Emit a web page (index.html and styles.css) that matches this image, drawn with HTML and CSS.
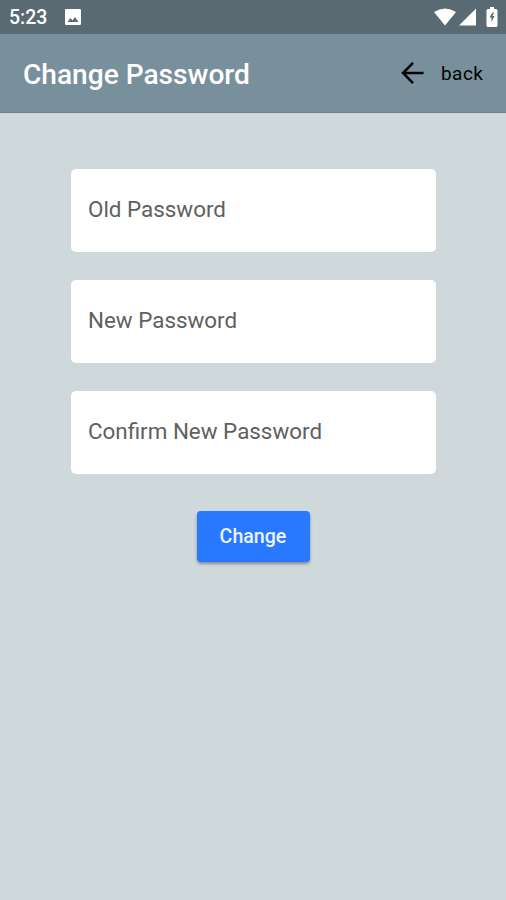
FILE: index.html
```html
<!DOCTYPE html>
<html lang="en">
<head>
<meta charset="utf-8">
<title>Change Password</title>
<link rel="stylesheet" href="styles.css">
</head>
<body>
<div class="status">
  <span class="time">5:23</span>
  <svg class="photo" width="18" height="18" viewBox="0 0 18 18"><path fill="#fff" fill-rule="evenodd" d="M2.200 1h13.600a1.200 1.200 0 0 1 1.200 1.200v13.600a1.200 1.200 0 0 1-1.200 1.200h-13.600a1.200 1.200 0 0 1-1.200-1.200v-13.600a1.200 1.200 0 0 1 1.200-1.200zM3.500 14h11l-3.500-5-2.500 3.500-2-2.500z"/></svg>
  <div class="signals">
    <svg class="wifi" width="22" height="18" viewBox="0 0 22 18"><path fill="#fff" d="M0 4Q11-3 22 4L11 17.500z"/></svg>
    <svg class="cell" width="17" height="18" viewBox="0 0 17 18"><path fill="#fff" d="M17 0.500v17H0z"/></svg>
    <svg width="12" height="20" viewBox="0 0 12 20"><path fill="#fff" fill-rule="evenodd" d="M4 0h4v2h2a1.500 1.500 0 0 1 1.500 1.500v15a1.500 1.500 0 0 1-1.500 1.500h-8a1.500 1.500 0 0 1-1.500-1.500v-15a1.500 1.500 0 0 1 1.500-1.500h2zM6.500 5.500l-3 5h2v4.500l3-6H6.500l1.500-3.500z"/></svg>
  </div>
</div>
<header class="toolbar">
  <h1>Change Password</h1>
  <a class="back"><svg width="24" height="24" viewBox="0 0 24 24"><path fill="none" stroke="#000" stroke-width="2.500" d="M12 1.800L2 12l10 10.200M2 12h20.500"/></svg><span>back</span></a>
</header>
<main class="form">
  <div class="field"><span>Old Password</span></div>
  <div class="field"><span>New Password</span></div>
  <div class="field"><span>Confirm New Password</span></div>
  <button class="submit">Change</button>
</main>
</body>
</html>
```
FILE: styles.css
```css
body { margin: 0; min-height: 900px; background: #cfd8db; font-family: Roboto, sans-serif; }
.status { height: 34px; box-sizing: border-box; background: #596a73; color: #fff; display: flex; align-items: center; padding: 0 8px 0 9px; }
.time { font-size: 19.5px; font-weight: 500; line-height: 24px; padding-top: 2px; }
.photo { margin-left: 17px; }
.signals { display: flex; align-items: center; margin-left: auto; }
.wifi { margin-right: 3px; }
.cell { margin-right: 10px; }
.toolbar { height: 79px; box-sizing: border-box; background: #78909c; border-bottom: 1px solid #6c818b; display: flex; align-items: center; justify-content: space-between; padding: 0 23px; }
h1 { margin: 0; color: #fff; font-size: 28.1px; line-height: 34px; font-weight: 500; padding-top: 4px; }
.back { display: flex; align-items: center; gap: 16px; color: #000; font-size: 19px; letter-spacing: .5px; }
.back span { margin-right: -0.5px; }
.form { display: flex; flex-direction: column; align-items: center; padding-top: 56px; }
.field { width: 365px; height: 83px; box-sizing: border-box; background: #fff; border-radius: 5px; margin: 0 0 28px 1px; padding: 0 17px 3px; display: flex; align-items: center; color: #606060; font-size: 22.4px; line-height: 26px; }
.submit { width: 113px; height: 51px; margin-top: 9px; border: 0; border-radius: 4px; background: #2979ff; color: #edf3ff; font: 500 19.6px Roboto, sans-serif; box-shadow: 0 2px 3px rgba(0,0,0,.35); }
```
